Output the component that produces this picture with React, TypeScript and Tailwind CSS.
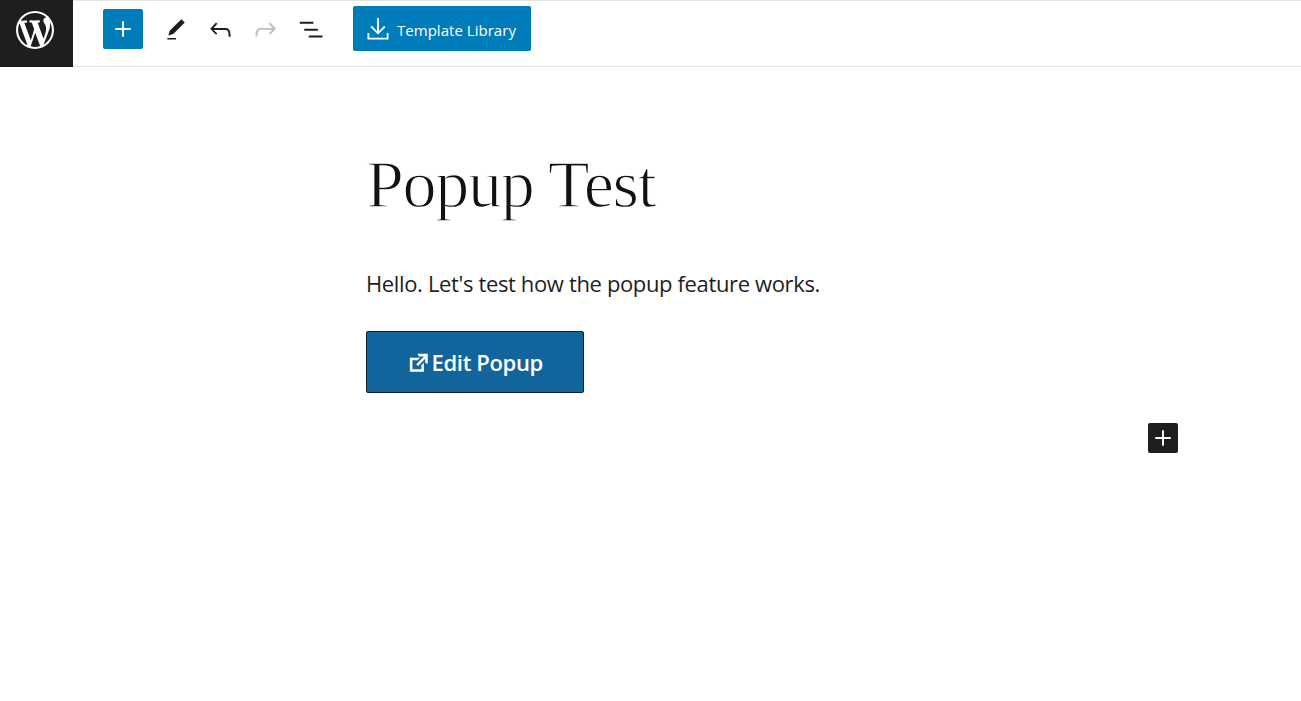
import type { ReactNode } from "react";

const PlusIcon = ({ className }: { className: string }) => (
  <svg viewBox="0 0 16 16" fill="none" stroke="currentColor" className={className}>
    <path strokeWidth="1.9" d="M8 0.2v15.6M0.2 8h15.6" />
  </svg>
);

const WordPressIcon = () => (
  <svg viewBox="0 0 20 20" fill="currentColor" className="h-[38px] w-[38px]">
    <path d="M20 10c0-5.51-4.49-10-10-10C4.48 0 0 4.49 0 10c0 5.52 4.48 10 10 10 5.51 0 10-4.48 10-10zM7.78 15.37L4.37 6.22c.55-.02 1.17-.08 1.17-.08.5-.06.44-1.13-.06-1.11 0 0-1.45.11-2.37.11-.18 0-.37 0-.58-.01C4.12 2.69 6.87 1.11 10 1.11c2.33 0 4.45.87 6.05 2.34-.68-.11-1.65.39-1.65 1.58 0 .74.45 1.36.9 2.1.35.61.55 1.36.55 2.46 0 1.49-1.4 5-1.4 5l-3.03-8.37c.54-.02.82-.17.82-.17.5-.05.44-1.25-.06-1.22 0 0-1.44.12-2.38.12-.87 0-2.33-.12-2.33-.12-.5-.03-.56 1.2-.06 1.22l.92.08 1.26 3.41zM17.41 10c.24-.64.74-1.87.43-4.25.7 1.29 1.05 2.71 1.05 4.25 0 3.29-1.73 6.24-4.4 7.78.97-2.59 1.94-5.2 2.92-7.78zM6.1 18.09C3.12 16.65 1.11 13.53 1.11 10c0-1.3.23-2.48.72-3.59C3.25 10.3 4.67 14.2 6.1 18.09zm4.03-6.63l2.58 6.98c-.86.29-1.76.45-2.71.45-.79 0-1.57-.11-2.29-.33.81-2.38 1.62-4.74 2.42-7.1z" />
  </svg>
);

const TOOLS: { label: string; disabled?: boolean; icon: ReactNode }[] = [
  {
    label: "Tools",
    icon: (
      <svg viewBox="0 0 24 24" fill="currentColor" className="mt-px ml-px h-[26px] w-[26px]">
        <path d="M20.1 5.1L16.9 2 6.2 12.7l-1.3 4.4 4.5-1.3L20.1 5.1zM4 20.8h8v-1.5H4v1.5z" />
      </svg>
    ),
  },
  {
    label: "Undo",
    icon: (
      <svg viewBox="0 0 24 24" fill="currentColor" className="h-[31px] w-[31px]">
        <path d="M18.3 11.7c-.6-.6-1.4-.9-2.3-.9H6.7l2.9-3.3-1.1-1-4.5 5L8.5 16l1-1-2.7-2.7H16c.5 0 .9.2 1.3.5 1 1 1 3.4 1 4.5v.3h1.5v-.2c0-1.5 0-4.3-1.5-5.7z" />
      </svg>
    ),
  },
  {
    label: "Redo",
    disabled: true,
    icon: (
      <svg viewBox="0 0 24 24" fill="currentColor" className="h-[31px] w-[31px]">
        <path d="M15.6 6.5l-1.1 1 2.9 3.3H8c-.9 0-1.7.3-2.3.9-1.4 1.5-1.4 4.2-1.4 5.6v.2h1.5v-.3c0-1.1 0-3.5 1-4.5.3-.3.7-.5 1.3-.5h9.2L14.5 15l1.1 1.1 4.6-4.6-4.6-5z" />
      </svg>
    ),
  },
  {
    label: "List View",
    icon: (
      <svg viewBox="0 0 24 24" fill="none" stroke="currentColor" className="h-6 w-6">
        <path strokeWidth="2" d="M0.8 5.7h13.6M5.3 12.7h13.6M9.8 19.5h13.6" />
      </svg>
    ),
  },
];

const Header = () => (
  <header className="flex h-[67px] border-y border-[#e2e2e2]">
    <a
      aria-label="View Posts"
      className="-mt-px flex h-[67px] w-[73px] shrink-0 bg-[#1e1e1e] pt-[11px] pl-4 text-white"
    >
      <WordPressIcon />
    </a>
    <div className="flex items-start pt-2 pl-[30px]">
      <button
        aria-label="Toggle block inserter"
        className="flex h-10 w-10 items-center justify-center rounded-[2px] bg-[#007cba] text-white"
      >
        <PlusIcon className="h-4 w-4" />
      </button>
      <div className="ml-[10px] flex">
        {TOOLS.map((tool) => (
          <button
            key={tool.label}
            aria-label={tool.label}
            className={`flex h-10 w-[45px] items-center justify-center ${
              tool.disabled ? "text-[#bdbdbd]" : "text-[#1e1e1e]"
            }`}
          >
            {tool.icon}
          </button>
        ))}
      </div>
      <button className="-mt-[3px] ml-5 flex h-[45px] w-[178px] items-center rounded-[2px] bg-[#007cba] pl-[14px] text-white">
        <svg viewBox="0 0 22 24" fill="none" stroke="currentColor" className="h-6 w-[22px]">
          <path strokeWidth="1.8" d="M11 1v15M4.2 9.5L11 16.3l6.8-6.8M1.4 16v5.6h19.2V16" />
        </svg>
        <span className="ml-2 pt-[3px] text-[15px] font-medium tracking-[0.03px] whitespace-nowrap">
          Template Library
        </span>
      </button>
    </div>
  </header>
);

const App = () => {
  return (
    <div className="h-[701px] overflow-hidden bg-white font-['Open_Sans','Noto_Sans',sans-serif] text-[#1e1e1e]">
      <Header />

      {/* Post content */}
      <main className="ml-[366px] flex w-[812px] flex-col items-start">
        {/* White outline thins the serif down to a light weight */}
        <h1 className="mt-[77px] h-20 font-['Liberation_Serif',serif] text-[68px] leading-[80px] tracking-[-1.25px] whitespace-nowrap text-[#111] [-webkit-text-stroke:1.3px_white]">
          Popup Test
        </h1>
        <p className="mt-[43px] text-[22px] leading-8 tracking-[-0.36px] whitespace-nowrap">
          Hello. Let's test how the popup feature works.
        </p>
        <button className="mt-8 flex h-[62px] w-[218px] items-center rounded-[2px] border border-[#10202c] bg-[#11659c] pl-[39px] text-white">
          <svg viewBox="0 0 20 20" fill="currentColor" className="mt-px h-[25.6px] w-[25.6px]">
            <path d="M9 3h8v8l-2-1V6.92l-5.6 5.59-1.41-1.41L14.08 5H10zm3 12v-3l2-2v7H3V6h8L9 8H5v7h7z" />
          </svg>
          <span className="pt-px text-[22px] font-semibold tracking-[-0.35px] whitespace-nowrap">
            Edit Popup
          </span>
        </button>
        <button
          aria-label="Add block"
          className="mt-[30px] flex h-[30px] w-[30px] items-center justify-center self-end rounded-[2px] bg-[#1e1e1e] text-white"
        >
          <PlusIcon className="h-4 w-4" />
        </button>
      </main>
    </div>
  );
};

export default App;
